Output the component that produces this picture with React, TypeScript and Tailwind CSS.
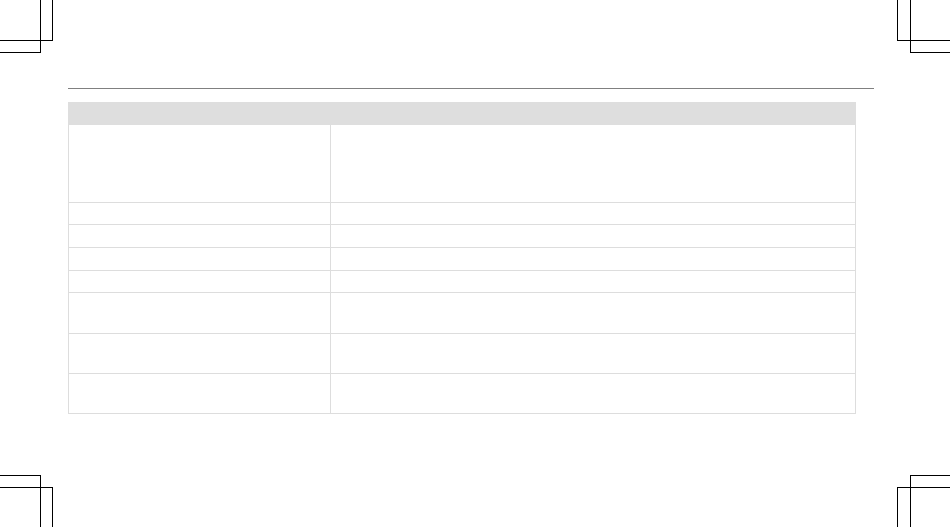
const rows = [
  "h-[78px]",
  "h-[22px]",
  "h-[23px]",
  "h-[23px]",
  "h-[22px]",
  "h-[41px]",
  "h-[40px]",
  "h-[40px]",
];

const CropMarks = () => (
  <>
    {/* top left */}
    <div className="absolute left-0 top-0 w-[41px] h-[53px] border-r border-b border-black" />
    <div className="absolute left-0 top-0 w-[53px] h-[41px] border-r border-b border-black" />
    {/* top right */}
    <div className="absolute left-[897px] top-0 w-[53px] h-[41px] border-l border-b border-black" />
    <div className="absolute left-[910px] top-0 w-[40px] h-[53px] border-l border-b border-black" />
    {/* bottom left */}
    <div className="absolute left-0 top-[475px] w-[41px] h-[52px] border-r border-t border-black" />
    <div className="absolute left-0 top-[487px] w-[53px] h-[40px] border-r border-t border-black" />
    {/* bottom right */}
    <div className="absolute left-[910px] top-[475px] w-[40px] h-[52px] border-l border-t border-black" />
    <div className="absolute left-[897px] top-[487px] w-[53px] h-[40px] border-l border-t border-black" />
  </>
);

export default function App() {
  return (
    <div className="relative w-[950px] h-[527px] bg-white overflow-hidden font-['Liberation_Sans',sans-serif]">
      <CropMarks />
      <div className="pt-[88px] pl-[68px]">
        <div className="w-[806px] h-px bg-[#808080]" />
        <div className="mt-[13px] w-[788px]">
          <div className="h-[23px] bg-[#dedede]" />
          <div className="border-l border-r border-[#dddddd]">
            {rows.map((h, i) => (
              <div key={i} className={`flex border-b border-[#dddddd] ${h}`}>
                <div className="w-[262px] border-r border-[#dddddd]" />
                <div className="flex-1" />
              </div>
            ))}
          </div>
        </div>
      </div>
    </div>
  );
}
